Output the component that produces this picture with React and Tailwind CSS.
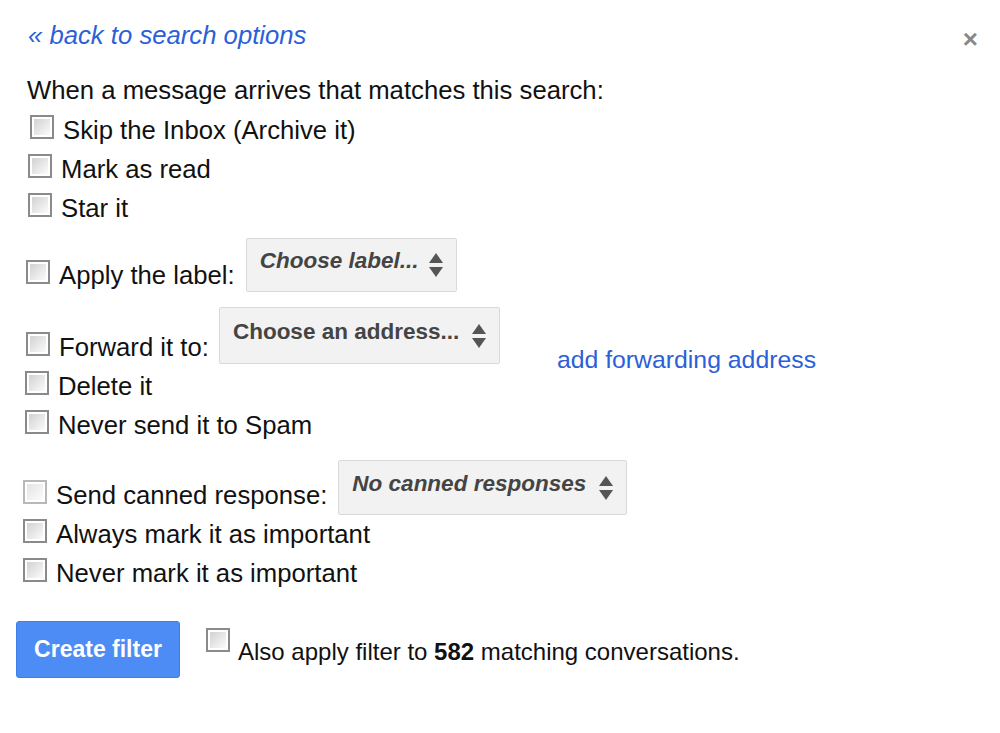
const Checkbox = ({ className = "" }) => (
  <div
    className={`w-[24px] h-[24px] shrink-0 border-2 border-[#8a8a8a] bg-white p-[2px] ${className}`}
  >
    <div className="w-full h-full bg-linear-to-br from-[#d2d2d2] to-[#fbfbfb]" />
  </div>
);

const Arrows = () => (
  <svg width="16" height="26" viewBox="0 0 16 26" className="shrink-0">
    <path d="M8 1 L15 11 L1 11 Z" fill="#555" />
    <path d="M8 25 L15 15 L1 15 Z" fill="#555" />
  </svg>
);

const Select = ({ label, italic, width, height }) => (
  <div
    className={`flex items-center justify-between pl-[13px] pr-[12px] bg-[#f2f2f2] border border-[#d9d9d9] rounded-[2px] text-[#444] text-[22.5px] font-bold ${
      italic ? "italic" : ""
    } ${width} ${height}`}
  >
    <span className="-mt-[8px] whitespace-nowrap">{label}</span>
    <Arrows />
  </div>
);

const Label = ({ children }) => (
  <span className="ml-[9px] text-[25.7px] leading-[30px] whitespace-nowrap">{children}</span>
);

const Row = ({ indent, label }) => (
  <div className={`flex items-center h-[39px] ${indent}`}>
    <Checkbox className="mb-[6px]" />
    <Label>{label}</Label>
  </div>
);

export default function App() {
  return (
    <div className="min-h-[733px] w-[1000px] bg-white text-[#111] font-['Liberation_Sans',Arial,sans-serif]">
      <div className="flex items-start justify-between pt-[20px] pl-[28px] pr-[22px]">
        <a className="text-[25.7px] leading-[30px] italic text-[#2c5fd8] cursor-pointer">
          « back to search options
        </a>
        <span className="mt-[6px] text-[26px] leading-[26px] font-bold text-[#888]">×</span>
      </div>

      <p className="mt-[23px] ml-[27px] text-[25.7px] leading-[30px]">
        When a message arrives that matches this search:
      </p>

      <div className="mt-[5px] flex flex-col">
        <Row indent="ml-[30px]" label="Skip the Inbox (Archive it)" />
        <Row indent="ml-[28px]" label="Mark as read" />
        <Row indent="ml-[28px]" label="Star it" />

        <div className="mt-[11px] flex items-end ml-[26px]">
          <div className="flex items-center h-[39px]">
            <Checkbox className="mb-[6px]" />
            <Label>Apply the label:</Label>
          </div>
          <div className="ml-[11px] mb-[2px]">
            <Select label="Choose label..." italic width="w-[211px]" height="h-[54px]" />
          </div>
        </div>

        <div className="mt-[13px] flex items-end ml-[26px]">
          <div className="flex items-center h-[39px]">
            <Checkbox className="mb-[6px]" />
            <Label>Forward it to:</Label>
          </div>
          <div className="ml-[10px] mb-[2px]">
            <Select label="Choose an address..." width="w-[281px]" height="h-[57px]" />
          </div>
          <a className="ml-[57px] -mb-[8px] text-[24.8px] leading-[28px] text-[#2c5fd8] cursor-pointer whitespace-nowrap">
            add forwarding address
          </a>
        </div>

        <Row indent="ml-[25px]" label="Delete it" />
        <Row indent="ml-[25px]" label="Never send it to Spam" />

        <div className="mt-[16px] flex items-end ml-[23px]">
          <div className="flex items-center h-[39px]">
            <Checkbox className="mb-[6px] opacity-60" />
            <Label>Send canned response:</Label>
          </div>
          <div className="ml-[11px] -mb-[1px]">
            <Select label="No canned responses" italic width="w-[289px]" height="h-[55px]" />
          </div>
        </div>

        <Row indent="ml-[23px]" label="Always mark it as important" />
        <Row indent="ml-[23px]" label="Never mark it as important" />
      </div>

      <div className="mt-[29px] ml-[16px] flex items-start">
        <button className="w-[164px] h-[57px] rounded-[3px] bg-[#4d8cf4] border border-[#3f7ee8] text-white text-[23px] font-bold">
          Create filter
        </button>
        <Checkbox className="ml-[26px] mt-[7px]" />
        <span className="ml-[8px] mt-[17px] text-[24px] leading-[28px] whitespace-nowrap">
          Also apply filter to <b>582</b> matching conversations.
        </span>
      </div>
    </div>
  );
}
